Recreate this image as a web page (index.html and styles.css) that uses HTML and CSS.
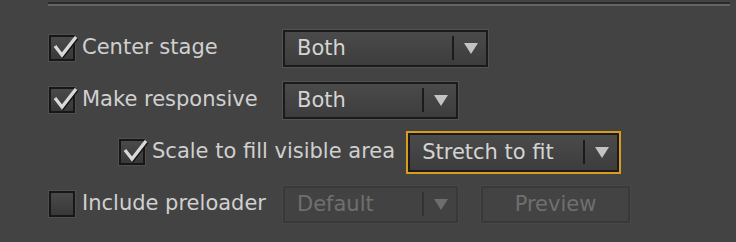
FILE: index.html
```html
<!DOCTYPE html>
<html lang="en">
<head>
    <meta charset="UTF-8" />
    <title>Publish settings</title>
    <link rel="stylesheet" href="styles.css">
</head>
<body>
    <div class="panel">
        <div class="rule"></div>

        <div class="row">
            <div class="field">
                <span class="checkbox">
                    <svg class="tick" viewBox="0 0 26 22"><path d="M3 10 L10 19 L24 1" /></svg>
                </span>
                <span class="label">Center stage</span>
            </div>
            <div class="select wide">
                <span class="value">Both</span>
                <span class="caret"></span>
            </div>
        </div>

        <div class="row">
            <div class="field">
                <span class="checkbox">
                    <svg class="tick" viewBox="0 0 26 22"><path d="M3 10 L10 19 L24 1" /></svg>
                </span>
                <span class="label">Make responsive</span>
            </div>
            <div class="select narrow">
                <span class="value">Both</span>
                <span class="caret"></span>
            </div>
        </div>

        <div class="row sub">
            <div class="field">
                <span class="checkbox">
                    <svg class="tick" viewBox="0 0 26 22"><path d="M3 10 L10 19 L24 1" /></svg>
                </span>
                <span class="label">Scale to fill visible area</span>
            </div>
            <div class="select focused">
                <span class="value">Stretch to fit</span>
                <span class="caret"></span>
            </div>
        </div>

        <div class="row">
            <div class="field">
                <span class="checkbox"></span>
                <span class="label">Include preloader</span>
            </div>
            <div class="select narrow disabled">
                <span class="value">Default</span>
                <span class="caret"></span>
            </div>
            <button class="btn" disabled>Preview</button>
        </div>
    </div>
</body>
</html>
```

FILE: styles.css
```css
body {
    margin: 0;
    background: #434343;
    font-family: "DejaVu Sans", "Liberation Sans", sans-serif;
    color: #d0d0d0;
}

.panel {
    padding: 0 6px 0 48px;
}

.rule {
    margin-top: 2px;
    height: 2px;
    background: #2b2b2b;
    border-bottom: 2px solid #656565;
}

.row {
    display: flex;
    align-items: center;
    height: 52px;
}

.rule + .row {
    margin-top: 16px;
}

.field {
    display: flex;
    align-items: center;
    width: 235px;
    flex: none;
}

.sub .field {
    width: auto;
    margin-left: 70px;
    margin-right: 13px;
}

.checkbox {
    position: relative;
    box-sizing: border-box;
    width: 26px;
    height: 26px;
    margin-left: 1px;
    border: 2px solid #171717;
    background: linear-gradient(#4a4a4a, #383838);
    box-shadow: 0 0 0 1px #4f4f4f;
    flex: none;
}

.tick {
    position: absolute;
    left: 1px;
    top: -1px;
    width: 26px;
    height: 22px;
    overflow: visible;
}

.tick path {
    fill: none;
    stroke: #d8d8d8;
    stroke-width: 3.4;
    stroke-linejoin: miter;
    filter: drop-shadow(1px 1px 0 #111);
}

.label {
    margin-left: 7px;
    font-size: 21px;
    white-space: nowrap;
    margin-top: -2px;
}

.select {
    box-sizing: border-box;
    display: flex;
    align-items: center;
    height: 37px;
    border: 2px solid #1b1b1b;
    background: linear-gradient(#4a4a4a, #3d3d3d);
    box-shadow: 0 0 0 1px #525252;
    font-size: 21px;
    color: #d4d4d4;
    flex: none;
}

.wide {
    width: 205px;
}

.narrow {
    width: 175px;
}

.focused {
    width: 211px;
    height: 39px;
    box-shadow: 0 0 0 2px #d99c1e;
}

.value {
    flex: 1;
    padding-left: 12px;
    white-space: nowrap;
}

.caret {
    display: flex;
    align-items: center;
    height: 24px;
    border-left: 2px solid #1b1b1b;
    padding: 0 8px 0 10px;
}

.caret::after {
    content: "";
    border-left: 7px solid transparent;
    border-right: 7px solid transparent;
    border-top: 11px solid #c3c3c3;
}

.disabled {
    border-color: #393939;
    background: #424242;
    box-shadow: 0 0 0 1px #474747;
    color: #6f6f6f;
}

.disabled .caret {
    border-left-color: #333;
}

.disabled .caret::after {
    border-top-color: #6d6d6d;
}

.btn {
    box-sizing: border-box;
    width: 149px;
    height: 37px;
    margin-left: 23px;
    border: 2px solid #393939;
    background: #434343;
    box-shadow: 0 0 0 1px #474747;
    font-family: inherit;
    font-size: 21px;
    color: #6f6f6f;
    padding: 0;
}
```
